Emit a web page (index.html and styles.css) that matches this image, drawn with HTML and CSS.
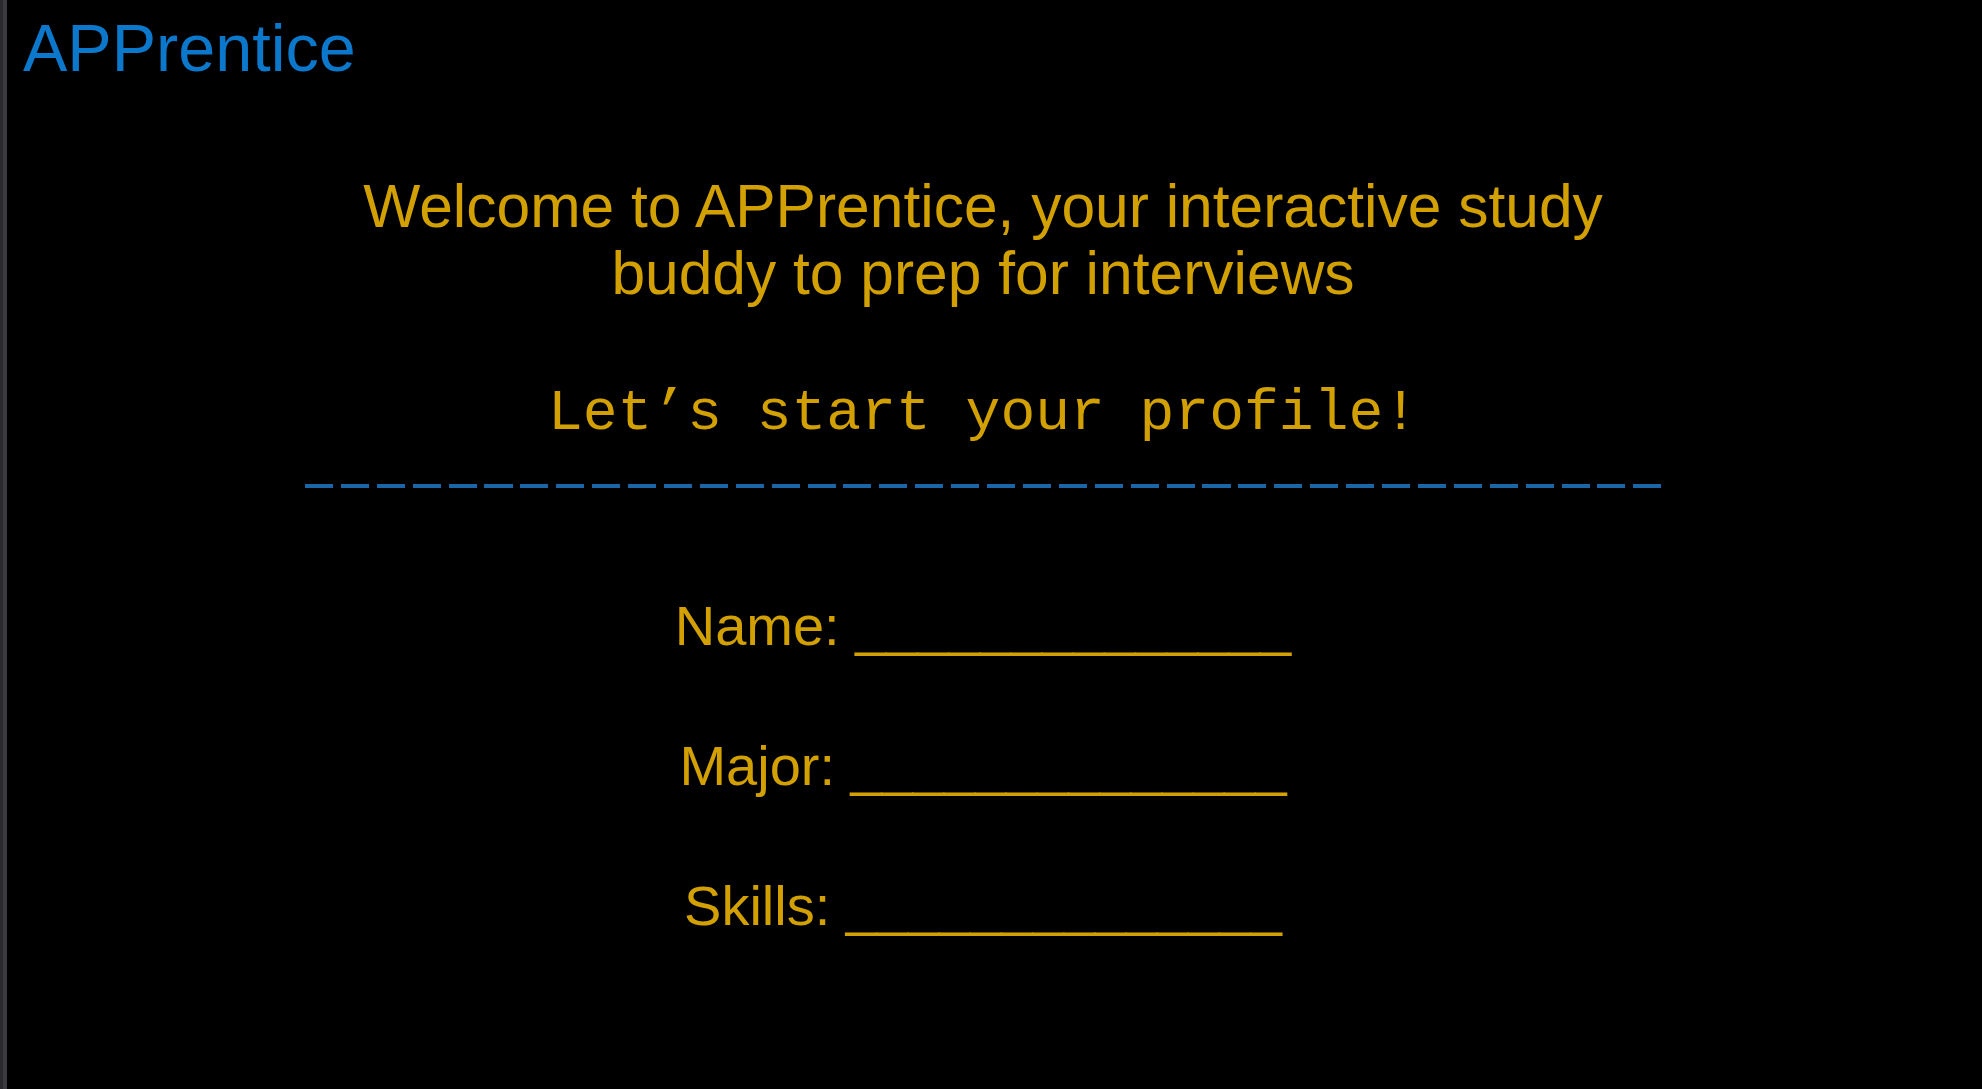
FILE: index.html
```html
<!DOCTYPE html>
<html lang="en">
<head>
<meta charset="utf-8">
<title>APPrentice</title>
<link rel="stylesheet" href="styles.css">
</head>
<body>
<div class="screen">
  <div class="edge"></div>
  <main class="main">
    <header class="brand">APPrentice</header>
    <section class="content">
      <p class="welcome">Welcome to APPrentice, your interactive study<br>buddy to prep for interviews</p>
      <p class="start">Let’s start your profile!</p>
      <div class="divider"></div>
      <div class="form">
        <div class="row">Name: ______________</div>
        <div class="row">Major: ______________</div>
        <div class="row">Skills: ______________</div>
      </div>
    </section>
  </main>
</div>
</body>
</html>
```

FILE: styles.css
```css
html, body {
  margin: 0;
  padding: 0;
  background: #000;
}

.screen {
  display: flex;
  min-height: 1089px;
  background: #000;
}

.edge {
  width: 7px;
  flex: none;
  background: linear-gradient(to right, #2a2a2e 0 3px, #3a3a3f 3px 7px);
}

.main {
  flex: 1;
  padding-right: 23px;
}

.brand {
  font-family: "Liberation Sans", Arial, sans-serif;
  font-size: 66.5px;
  line-height: 66px;
  color: #0b78cc;
  padding: 15px 0 0 16px;
}

.content {
  display: flex;
  flex-direction: column;
  align-items: center;
  text-align: center;
  color: #d2a000;
}

.welcome {
  margin: 92px 0 0;
  font-family: "Liberation Sans", Arial, sans-serif;
  font-size: 60.5px;
  line-height: 67px;
}

.start {
  margin: 72px 0 0;
  font-family: "Courier New", "Nimbus Mono PS", "Nimbus Mono L", FreeMono, "Liberation Mono", monospace;
  font-size: 58px;
  line-height: 70px;
  white-space: pre;
}

.divider {
  margin-top: 35px;
  width: 1364px;
  height: 4px;
  margin-left: 8px;
  background: repeating-linear-gradient(to right, #1b66a6 0 28px, transparent 28px 35.9px);
}

.form {
  margin-top: 68px;
  display: flex;
  flex-direction: column;
  align-items: center;
}

.row {
  font-family: "Liberation Sans", Arial, sans-serif;
  font-size: 56px;
  line-height: 140px;
  height: 140px;
  white-space: pre;
}
```
